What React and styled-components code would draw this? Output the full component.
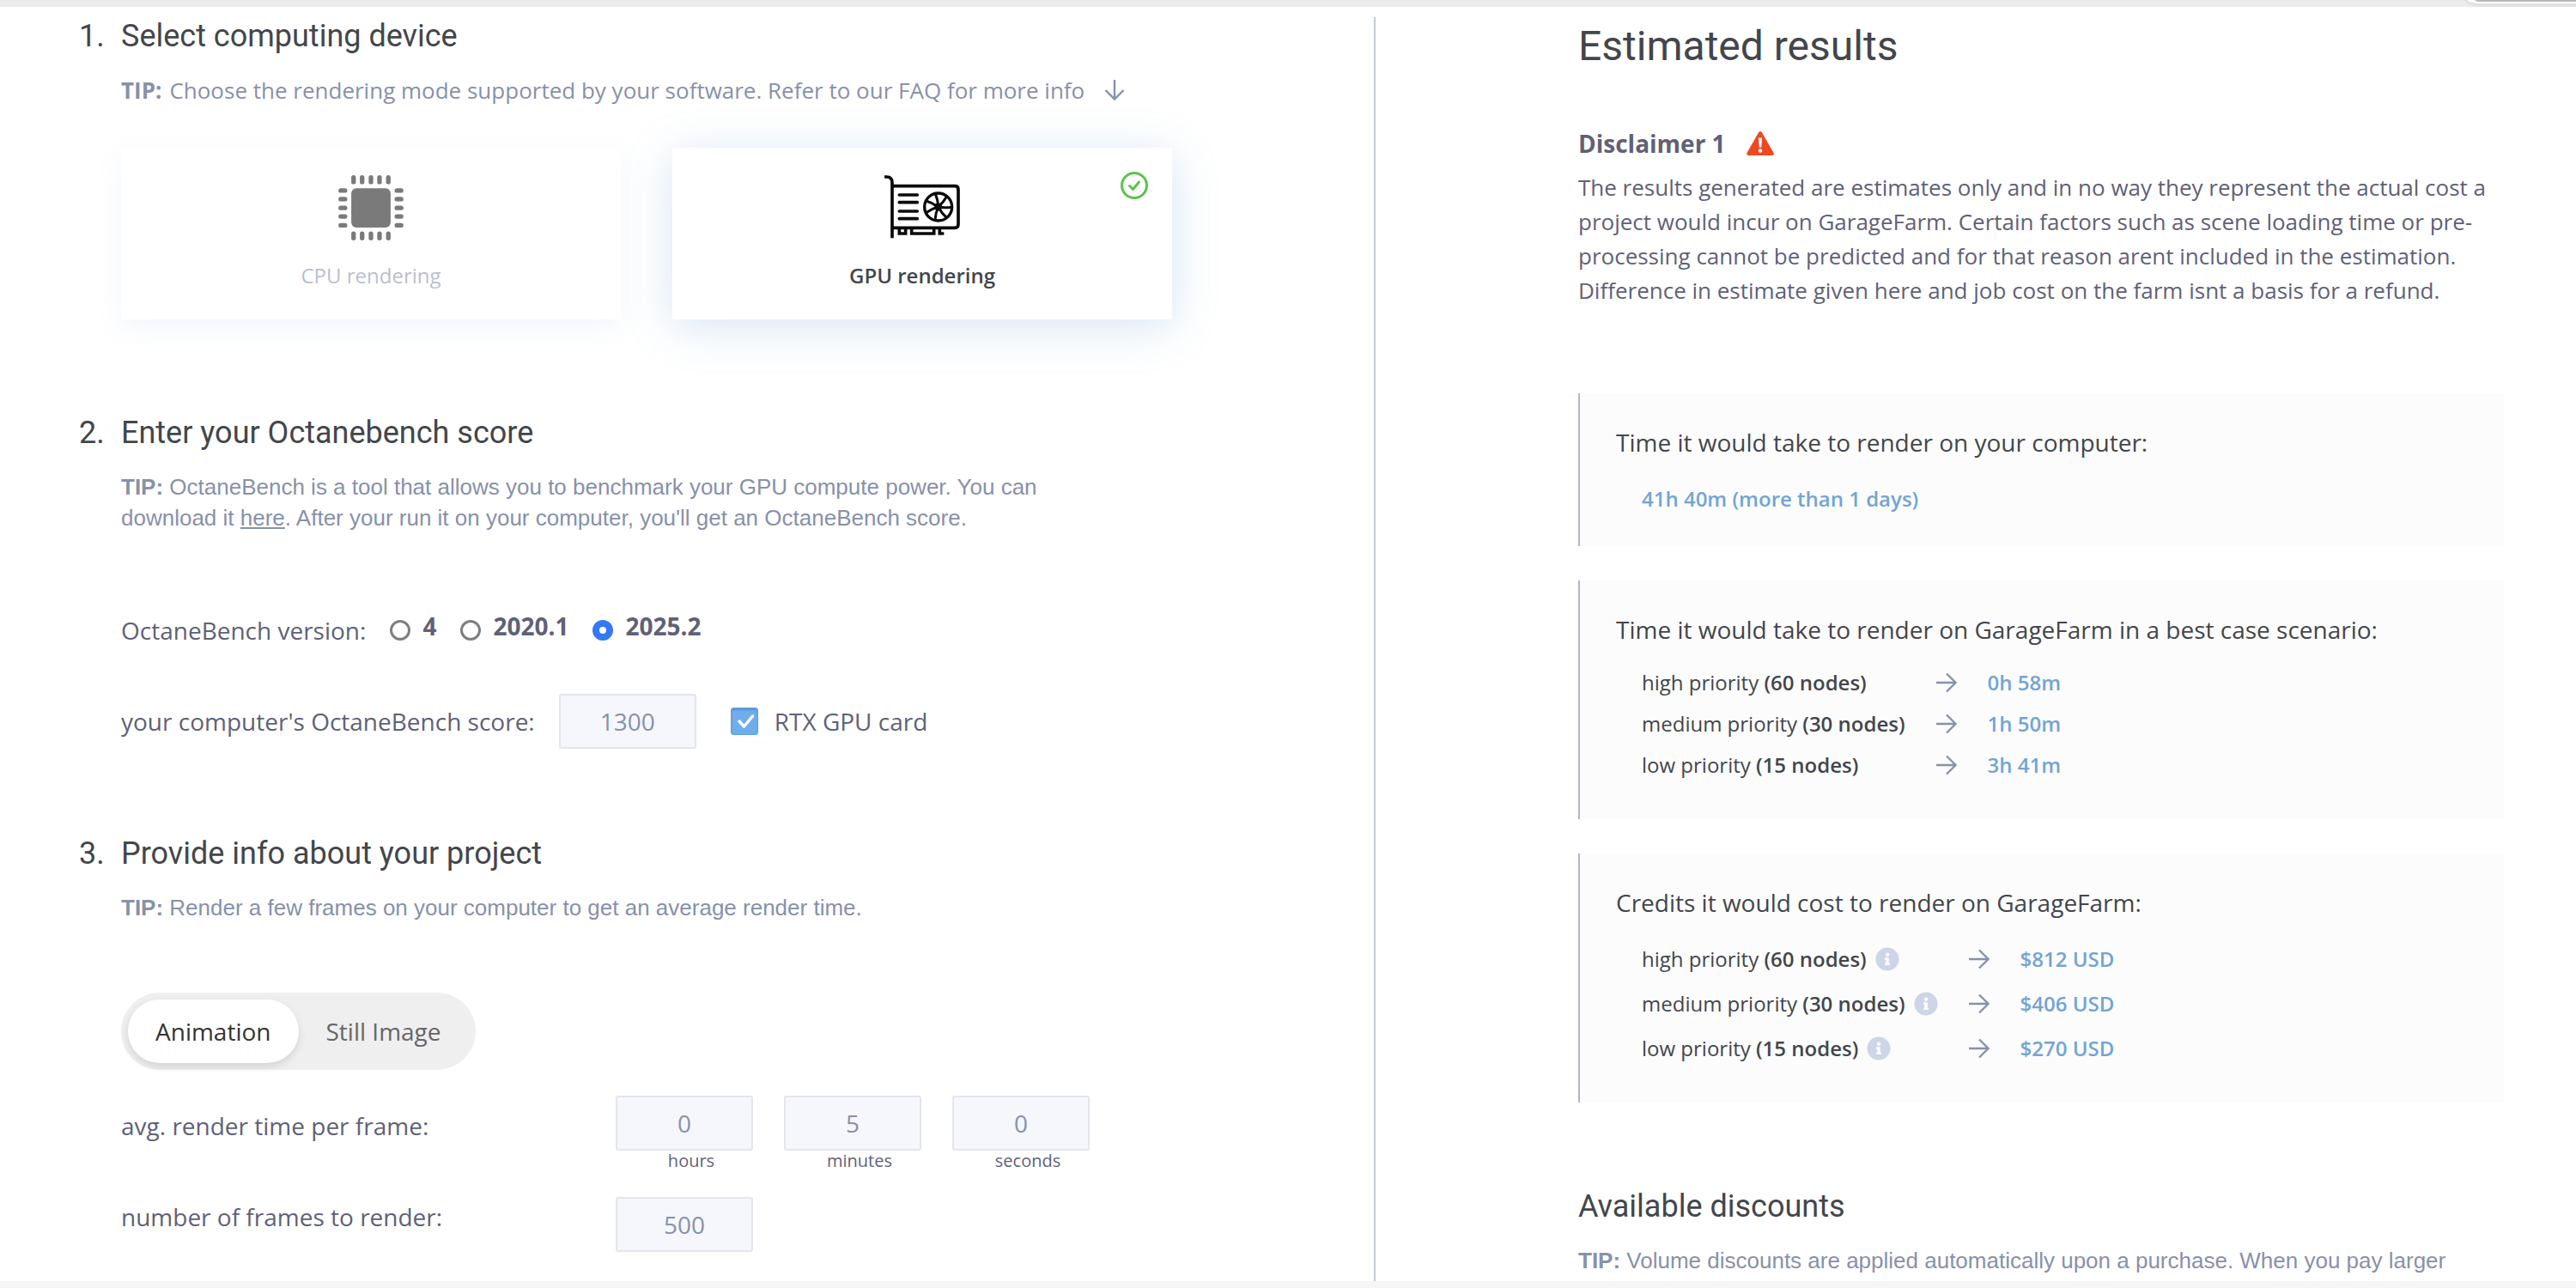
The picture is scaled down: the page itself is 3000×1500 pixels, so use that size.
import React, { useState } from "react";
import styled, { createGlobalStyle, css } from "styled-components";
import { FaInfoCircle } from "react-icons/fa";

const GlobalStyle = createGlobalStyle`
  * {
    box-sizing: border-box;
  }

  body {
    margin: 0;
    background: #ffffff;
    color: #5f6177;
    font-family: "Open Sans", sans-serif;
    font-size: 28px;
    line-height: 40px;
  }

  button,
  input {
    font-family: inherit;
  }
`;

const Page = styled.div`
  display: flex;
  flex-direction: column;
  min-height: 100vh;
`;

const TopBar = styled.div`
  display: flex;
  justify-content: flex-end;
  height: 8px;
  background: #ececec;
`;

const TopTab = styled.div`
  width: 130px;
  padding-left: 4px;
  background: #e2e2e2;
  border-bottom-left-radius: 24px 8px;
`;

const TopTabInner = styled.div`
  height: 4px;
  background: #b8b8b8;
  border-left: 8px solid #ffffff;
  border-bottom: 2px solid #ffffff;
  border-bottom-left-radius: 16px 4px;
`;

const BottomBar = styled.div`
  height: 8px;
  background: #f6f6f6;
`;

const Columns = styled.div`
  flex: 1;
  display: grid;
  grid-template-columns: 8fr 7fr;
`;

const Steps = styled.main`
  padding: 11px 60px 32px 92px;
`;

const Results = styled.aside`
  margin-top: 12px;
  padding: 4px 84px 4px 236px;
  border-left: 2px solid #c3c9d6;
`;

const Step = styled.section`
  margin-bottom: ${(props) => props.$gap || 0}px;
`;

const StepBody = styled.div`
  margin-left: 49px;
`;

const baseHeading = css`
  margin: 0;
  font-family: Roboto, sans-serif;
  font-weight: 400;
  color: #43464b;
`;

const PageTitle = styled.h1`
  ${baseHeading};
  font-size: 48px;
  line-height: 60px;
`;

const Heading = styled.h2`
  ${baseHeading};
  display: flex;
  margin-bottom: 22px;
  font-size: 36px;
  line-height: 46px;
`;

const StepNumber = styled.span`
  width: 49px;
`;

const Tip = styled.p`
  display: ${(props) => (props.$inline ? "flex" : "block")};
  align-items: center;
  gap: 9px;
  max-width: ${(props) => (props.$inline ? "none" : "1120px")};
  margin: 0;
  font-family: ${(props) =>
    props.$inline ? "inherit" : '"Liberation Sans", sans-serif'};
  font-size: 26px;
  line-height: 36px;
  color: #8791aa;

  a {
    color: inherit;
  }

  svg {
    margin-left: 14px;
  }
`;

const Cards = styled.div`
  display: flex;
  gap: 60px;
  margin-top: 49px;
`;

const Card = styled.button`
  position: relative;
  display: flex;
  flex: 1;
  flex-direction: column;
  align-items: center;
  gap: 23px;
  max-width: 582px;
  height: 200px;
  padding: 32px 0 0;
  border: 0;
  background: #ffffff;
  font-size: 24px;
  line-height: 36px;
  cursor: pointer;
  color: ${(props) => (props.$active ? "#43464b" : "#b9bfd0")};
  font-weight: ${(props) => (props.$active ? 600 : 400)};
  box-shadow: ${(props) =>
    props.$active
      ? "0 8px 48px rgba(110, 160, 210, 0.28)"
      : "0 10px 28px rgba(110, 160, 210, 0.09)"};
`;

const CardCheck = styled.svg`
  position: absolute;
  top: 28px;
  right: 28px;
`;

const Row = styled.div`
  display: flex;
  align-items: center;
  margin-top: ${(props) => props.$top}px;
`;

const Options = styled.div`
  display: flex;
  align-items: center;
  gap: 28px;
  margin-left: 28px;
`;

const Option = styled.label`
  display: flex;
  align-items: center;
  gap: 14px;
  font-weight: 700;
`;

const OptionText = styled.span`
  margin-bottom: 10px;
`;

const Radio = styled.input`
  appearance: none;
  width: 24px;
  height: 24px;
  margin: 0;
  border: 3px solid #7f7f7f;
  border-radius: 50%;
  background: #ffffff;

  &:checked {
    border: 8px solid #3478f6;
  }
`;

const NumberInput = styled.input`
  display: block;
  width: 160px;
  height: 64px;
  padding: 0;
  border: 2px solid #e4e6eb;
  border-radius: 3px;
  background: #f5f7fc;
  font-size: 28px;
  text-align: center;
  color: #8791aa;
`;

const CheckLabel = styled.label`
  display: flex;
  align-items: center;
  gap: 19px;
  margin-left: 40px;
`;

const CheckHolder = styled.span`
  position: relative;
  display: flex;

  svg {
    position: absolute;
    top: 0;
    left: 0;
    pointer-events: none;
  }
`;

const Checkbox = styled.input`
  appearance: none;
  width: 32px;
  height: 32px;
  margin: 0;
  border: 1px solid #679fd8;
  border-radius: 3px;
  background: #ffffff;

  &:checked {
    background: #70adec;
    box-shadow: inset 0 2px 2px rgba(60, 100, 150, 0.35);
  }
`;

const Toggle = styled.div`
  display: inline-flex;
  margin-top: 81px;
  padding: 8px;
  border-radius: 45px;
  background: #efefef;
  vertical-align: top;
`;

const ToggleButton = styled.button`
  height: 74px;
  padding: 0 32px;
  border: 0;
  border-radius: 37px;
  font-size: 28px;
  cursor: pointer;
  color: ${(props) => (props.$active ? "#333333" : "#666666")};
  background: ${(props) => (props.$active ? "#ffffff" : "transparent")};
  box-shadow: ${(props) =>
    props.$active ? "0 4px 10px rgba(0, 0, 0, 0.12)" : "none"};
`;

const FieldRow = styled.div`
  display: flex;
  margin-top: 30px;
`;

const FieldLabel = styled.label`
  width: 576px;
  padding-top: ${(props) => props.$drop}px;
`;

const TimeFields = styled.div`
  display: flex;
  gap: 36px;
`;

const Unit = styled.label`
  display: block;
  padding-left: 16px;
  font-size: 20px;
  line-height: 24px;
  text-align: center;
`;

const Disclaimer = styled.h3`
  display: flex;
  align-items: center;
  gap: 24px;
  margin: 63px 0 11px;
  font-size: 28px;
  font-weight: 700;
`;

const Text = styled.p`
  margin: 0 0 100px;
  font-size: 26px;
`;

const Panels = styled.div`
  display: flex;
  flex-direction: column;
  gap: 40px;
  margin-bottom: 98px;
`;

const Panel = styled.section`
  padding: 37px 42px ${(props) => props.$bottom || 37}px;
  border-left: 2px solid #b0b3d0;
  background: #fcfcfc;
  color: #43464b;
`;

const PanelTitle = styled.h3`
  margin: 0;
  font-size: 28px;
  font-weight: 400;
`;

const PanelValue = styled.p`
  margin: 28px 0 0 30px;
  font-size: 24px;
  font-weight: 600;
  line-height: 36px;
  color: #73a4d4;
`;

const PriorityTable = styled.table`
  margin: ${(props) => (props.$roomy ? 20 : 18)}px 0 0 30px;
  border-collapse: collapse;
  font-size: 24px;

  th,
  td {
    height: ${(props) => (props.$roomy ? 52 : 48)}px;
    padding: 0 36px 0 0;
    font-weight: 400;
    text-align: left;
    white-space: nowrap;
  }

  strong {
    font-weight: 600;
  }

  td:last-child {
    padding-right: 0;
    font-weight: 600;
    color: #73a4d4;
  }

  svg {
    display: block;
  }
`;

const PriorityName = styled.span`
  display: flex;
  align-items: center;
  gap: 10px;
`;

const InfoIcon = styled(FaInfoCircle)`
  color: #cdd5e8;
`;

const CpuIcon = () => (
  <svg width="76" height="76" viewBox="42 41 228 229" fill="#7a7a7a">
    <rect x="87" y="87" width="138" height="138" rx="18" />
    {[95, 125, 156, 186, 217].map((p) => (
      <g key={p}>
        <rect x={p - 8} y="41" width="16" height="32" rx="8" />
        <rect x={p - 8} y="238" width="16" height="32" rx="8" />
        <rect x="42" y={p - 8} width="31" height="16" rx="8" />
        <rect x="239" y={p - 8} width="31" height="16" rx="8" />
      </g>
    ))}
  </svg>
);

const GpuIcon = () => (
  <svg
    width="88"
    height="76"
    viewBox="60 68 264 228"
    fill="none"
    stroke="#0a0a0a"
    strokeWidth="11"
  >
    <path d="M60 74H68Q87 74 87 94V288" />
    <path d="M87 106H306Q318 106 318 118V240Q318 252 306 252H87" />
    <path
      d="M112 137H175M112 163H175M112 194H175M112 220H175"
      strokeLinecap="round"
    />
    <path d="M112 252V272H134V252M155 252V272H233V252M253 252V272H268" />
    <circle cx="248" cy="179" r="48" strokeWidth="10" />
    <circle cx="248" cy="179" r="8" fill="#0a0a0a" />
    {[0, 1, 2, 3, 4, 5, 6].map((i) => (
      <path
        key={i}
        d="M0 0Q-1 -24 -10 -46"
        strokeWidth="9"
        transform={`translate(248 179) rotate(${i * 51.43})`}
      />
    ))}
  </svg>
);

const Arrow = ({ down }) => (
  <svg
    width="24"
    height="24"
    viewBox="0 0 24 24"
    fill="none"
    stroke="#8791aa"
    strokeWidth="2.4"
  >
    <path
      d="M0 12H23M12 1.5L22.6 12L12 22.5"
      transform={down ? "rotate(90 12 12)" : undefined}
    />
  </svg>
);

const WarningIcon = () => (
  <svg width="32" height="28" viewBox="0 0 32 28">
    <path
      d="M14.2 1.1Q16 -1 17.8 1.1L31.5 25Q32.4 28 29.5 28H2.5Q-.4 28 .5 25Z"
      fill="#ee4823"
    />
    <path d="M13.9 7.5H18.1L17.3 18.5H14.7Z" fill="#ffffff" />
    <circle cx="16" cy="22.5" r="2.2" fill="#ffffff" />
  </svg>
);

const devices = [
  { id: "cpu", name: "CPU rendering", Icon: CpuIcon },
  { id: "gpu", name: "GPU rendering", Icon: GpuIcon },
];

const versions = ["4", "2020.1", "2025.2"];

const units = [
  { name: "hours", value: 0 },
  { name: "minutes", value: 5 },
  { name: "seconds", value: 0 },
];

const priorities = [
  { name: "high priority", nodes: 60, time: "0h 58m", cost: "$812 USD" },
  { name: "medium priority", nodes: 30, time: "1h 50m", cost: "$406 USD" },
  { name: "low priority", nodes: 15, time: "3h 41m", cost: "$270 USD" },
];

function Priorities({ field, info }) {
  return (
    <PriorityTable $roomy={info}>
      <tbody>
        {priorities.map((item) => (
          <tr key={item.name}>
            <th scope="row">
              <PriorityName>
                <span>
                  {item.name} <strong>({item.nodes} nodes)</strong>
                </span>
                {info && <InfoIcon size={28} />}
              </PriorityName>
            </th>
            <td>
              <Arrow />
            </td>
            <td>{item[field]}</td>
          </tr>
        ))}
      </tbody>
    </PriorityTable>
  );
}

export default function App() {
  const [device, setDevice] = useState("gpu");
  const [mode, setMode] = useState("Animation");

  return (
    <Page>
      <GlobalStyle />
      <TopBar>
        <TopTab>
          <TopTabInner />
        </TopTab>
      </TopBar>
      <Columns>
        <Steps>
          <Step $gap={109}>
            <Heading>
              <StepNumber>1.</StepNumber>Select computing device
            </Heading>
            <StepBody>
              <Tip $inline>
                <strong>TIP:</strong>
                Choose the rendering mode supported by your software. Refer to
                our FAQ for more info
                <Arrow down />
              </Tip>
              <Cards>
                {devices.map(({ id, name, Icon }) => (
                  <Card
                    key={id}
                    type="button"
                    $active={device === id}
                    aria-pressed={device === id}
                    onClick={() => setDevice(id)}
                  >
                    <Icon />
                    {name}
                    {device === id && (
                      <CardCheck
                        width="32"
                        height="32"
                        viewBox="0 0 32 32"
                        fill="none"
                        stroke="#5bc24f"
                        strokeWidth="3"
                        strokeLinecap="round"
                        strokeLinejoin="round"
                      >
                        <circle cx="16" cy="16" r="14.5" />
                        <path d="M10.5 16.5L14.5 20.5L21.5 12" />
                      </CardCheck>
                    )}
                  </Card>
                ))}
              </Cards>
            </StepBody>
          </Step>

          <Step $gap={99}>
            <Heading>
              <StepNumber>2.</StepNumber>Enter your Octanebench score
            </Heading>
            <StepBody>
              <Tip>
                <strong>TIP:</strong> OctaneBench is a tool that allows you to
                benchmark your GPU compute power. You can download it{" "}
                <a href="#octanebench">here</a>. After your run it on your
                computer, you'll get an OctaneBench score.
              </Tip>
              <Row $top={88}>
                <span id="version-label">OctaneBench version:</span>
                <Options role="radiogroup" aria-labelledby="version-label">
                  {versions.map((version) => (
                    <Option key={version}>
                      <Radio
                        type="radio"
                        name="version"
                        defaultChecked={version === "2025.2"}
                      />
                      <OptionText>{version}</OptionText>
                    </Option>
                  ))}
                </Options>
              </Row>
              <Row $top={49}>
                <label htmlFor="score">your computer's OctaneBench score:</label>
                <Options>
                  <NumberInput id="score" defaultValue="1300" />
                </Options>
                <CheckLabel>
                  <CheckHolder>
                    <Checkbox type="checkbox" defaultChecked />
                    <svg
                      width="32"
                      height="32"
                      viewBox="0 0 32 32"
                      fill="none"
                      stroke="#ffffff"
                      strokeWidth="3.4"
                      strokeLinecap="round"
                      strokeLinejoin="round"
                    >
                      <path d="M10 16L15.5 22L25.5 10" />
                    </svg>
                  </CheckHolder>
                  RTX GPU card
                </CheckLabel>
              </Row>
            </StepBody>
          </Step>

          <Step>
            <Heading>
              <StepNumber>3.</StepNumber>Provide info about your project
            </Heading>
            <StepBody>
              <Tip>
                <strong>TIP:</strong> Render a few frames on your computer to
                get an average render time.
              </Tip>
              <Toggle>
                {["Animation", "Still Image"].map((name) => (
                  <ToggleButton
                    key={name}
                    type="button"
                    $active={mode === name}
                    aria-pressed={mode === name}
                    onClick={() => setMode(name)}
                  >
                    {name}
                  </ToggleButton>
                ))}
              </Toggle>
              <FieldRow>
                <FieldLabel htmlFor="hours" $drop={15}>
                  avg. render time per frame:
                </FieldLabel>
                <TimeFields>
                  {units.map(({ name, value }) => (
                    <div key={name}>
                      <NumberInput id={name} defaultValue={value} />
                      <Unit htmlFor={name}>{name}</Unit>
                    </div>
                  ))}
                </TimeFields>
              </FieldRow>
              <FieldRow>
                <FieldLabel htmlFor="frames" $drop={3}>
                  number of frames to render:
                </FieldLabel>
                <NumberInput id="frames" defaultValue="500" />
              </FieldRow>
            </StepBody>
          </Step>
        </Steps>

        <Results>
          <PageTitle>Estimated results</PageTitle>
          <Disclaimer>
            Disclaimer 1
            <WarningIcon />
          </Disclaimer>
          <Text>
            The results generated are estimates only and in no way they
            represent the actual cost a project would incur on GarageFarm.
            Certain factors such as scene loading time or pre-processing cannot
            be predicted and for that reason arent included in the estimation.
            Difference in estimate given here and job cost on the farm isnt a
            basis for a refund.
          </Text>
          <Panels>
            <Panel>
              <PanelTitle>
                Time it would take to render on your computer:
              </PanelTitle>
              <PanelValue>41h 40m (more than 1 days)</PanelValue>
            </Panel>
            <Panel $bottom={39}>
              <PanelTitle>
                Time it would take to render on GarageFarm in a best case
                scenario:
              </PanelTitle>
              <Priorities field="time" />
            </Panel>
            <Panel>
              <PanelTitle>
                Credits it would cost to render on GarageFarm:
              </PanelTitle>
              <Priorities field="cost" info />
            </Panel>
          </Panels>
          <Heading>Available discounts</Heading>
          <Tip>
            <strong>TIP:</strong> Volume discounts are applied automatically
            upon a purchase. When you pay larger
          </Tip>
        </Results>
      </Columns>
      <BottomBar />
    </Page>
  );
}
